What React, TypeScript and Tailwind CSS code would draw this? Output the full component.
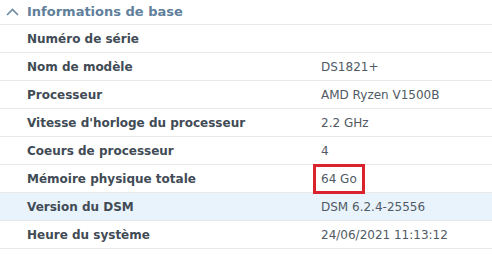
import React from "react";

interface Row {
  label: string;
  value: string;
  highlight?: boolean;
  boxed?: boolean;
}

const rows: Row[] = [
  { label: "Numéro de série", value: "" },
  { label: "Nom de modèle", value: "DS1821+" },
  { label: "Processeur", value: "AMD Ryzen V1500B" },
  { label: "Vitesse d'horloge du processeur", value: "2.2 GHz" },
  { label: "Coeurs de processeur", value: "4" },
  { label: "Mémoire physique totale", value: "64 Go", boxed: true },
  { label: "Version du DSM", value: "DSM 6.2.4-25556", highlight: true },
  { label: "Heure du système", value: "24/06/2021 11:13:12" },
];

export default function App() {
  return (
    <div className="w-[492px] h-[255px] bg-white font-['DejaVu_Sans',Verdana,sans-serif] text-[12px] overflow-hidden">
      {/* header */}
      <div className="h-[25px] flex items-center border-b border-[#e8eaec]">
        <svg width="13" height="8" viewBox="0 0 13 8" className="ml-[6px] mr-[8px]">
          <path d="M1 7 L6.5 1.5 L12 7" fill="none" stroke="#6d8aa3" strokeWidth="1.6" />
        </svg>
        <span className="font-bold text-[#5f7f9b] text-[13px]">Informations de base</span>
      </div>

      {rows.map((r, i) => (
        <div
          key={i}
          className={`h-[28px] pt-[1px] flex items-center border-b border-[#e8eaec] ${r.highlight ? "bg-[#e9f3fc]" : ""}`}
        >
          <div className="w-[321px] pl-[27px] font-bold text-[#414b55]">{r.label}</div>
          <div className="text-[#505a64]">
            {r.boxed ? (
              <span className="inline-block border-[3px] border-[#d9232d] -ml-[8px] px-[5px] py-[4px] leading-[16px]">
                {r.value}
              </span>
            ) : (
              r.value
            )}
          </div>
        </div>
      ))}
    </div>
  );
}
